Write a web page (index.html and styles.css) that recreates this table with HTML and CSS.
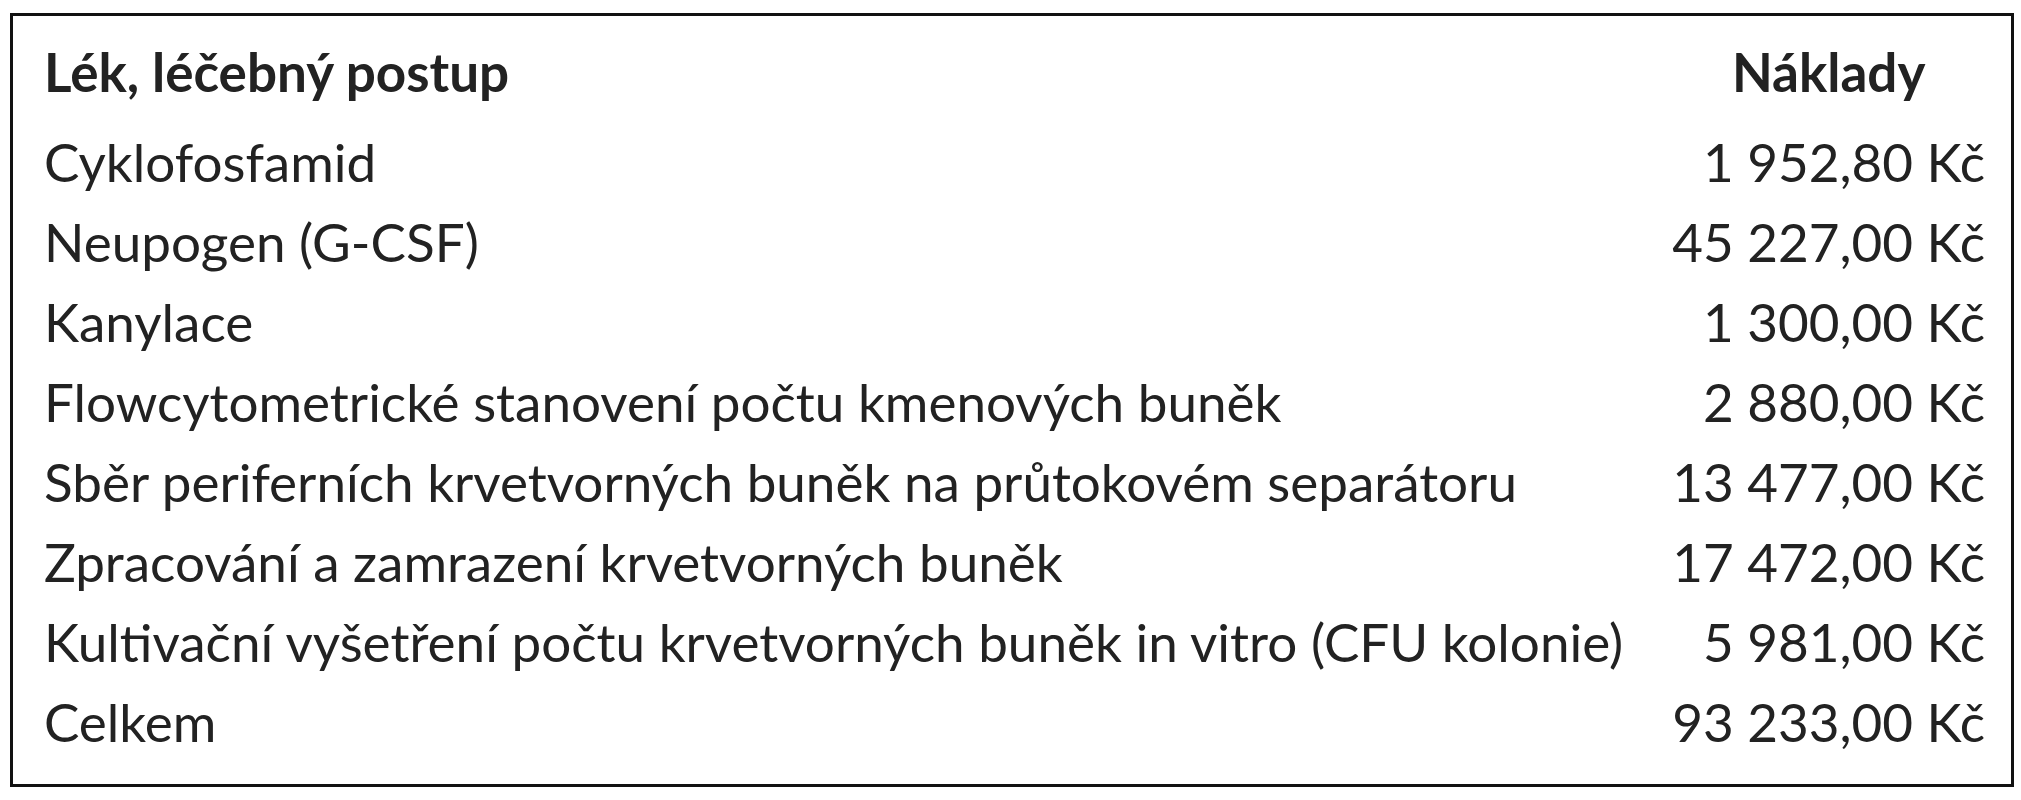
FILE: index.html
```html
<!DOCTYPE html>
<html lang="cs">
<head>
<meta charset="utf-8">
<title>Náklady</title>
<link rel="stylesheet" href="styles.css">
</head>
<body>
<div class="box">
  <table class="costs">
    <thead>
      <tr><th class="name">Lék, léčebný postup</th><th class="cost">Náklady</th></tr>
    </thead>
    <tbody>
      <tr><td class="name">Cyklofosfamid</td><td class="cost">1 952,80 Kč</td></tr>
      <tr><td class="name">Neupogen (G-CSF)</td><td class="cost">45 227,00 Kč</td></tr>
      <tr><td class="name">Kanylace</td><td class="cost">1 300,00 Kč</td></tr>
      <tr><td class="name">Flowcytometrické stanovení počtu kmenových buněk</td><td class="cost">2 880,00 Kč</td></tr>
      <tr><td class="name">Sběr periferních krvetvorných buněk na průtokovém separátoru</td><td class="cost">13 477,00 Kč</td></tr>
      <tr><td class="name">Zpracování a zamrazení krvetvorných buněk</td><td class="cost">17 472,00 Kč</td></tr>
      <tr><td class="name">Kultivační vyšetření počtu krvetvorných buněk in vitro (CFU kolonie)</td><td class="cost">5 981,00 Kč</td></tr>
      <tr><td class="name">Celkem</td><td class="cost">93 233,00 Kč</td></tr>
    </tbody>
  </table>
</div>
</body>
</html>
```
FILE: styles.css
```css
html, body {
  margin: 0;
  padding: 0;
  background: #ffffff;
}
.box {
  margin: 13px 0 0 10px;
  width: 2004px;
  height: 774px;
  box-sizing: border-box;
  border: 3px solid #111111;
  padding: 16px 26px 0 31px;
}
.costs {
  width: 100%;
  border-collapse: collapse;
  font-family: Lato, "Liberation Sans", sans-serif;
  font-size: 53px;
  line-height: 80px;
  color: #222222;
}
.costs th, .costs td {
  padding: 0;
  white-space: nowrap;
}
.costs th {
  font-weight: bold;
  padding-bottom: 10px;
}
.costs th.name { text-align: left; }
.costs th.cost { text-align: center; }
.costs td.name { text-align: left; }
.costs td.cost { text-align: right; width: 1%; }
```
